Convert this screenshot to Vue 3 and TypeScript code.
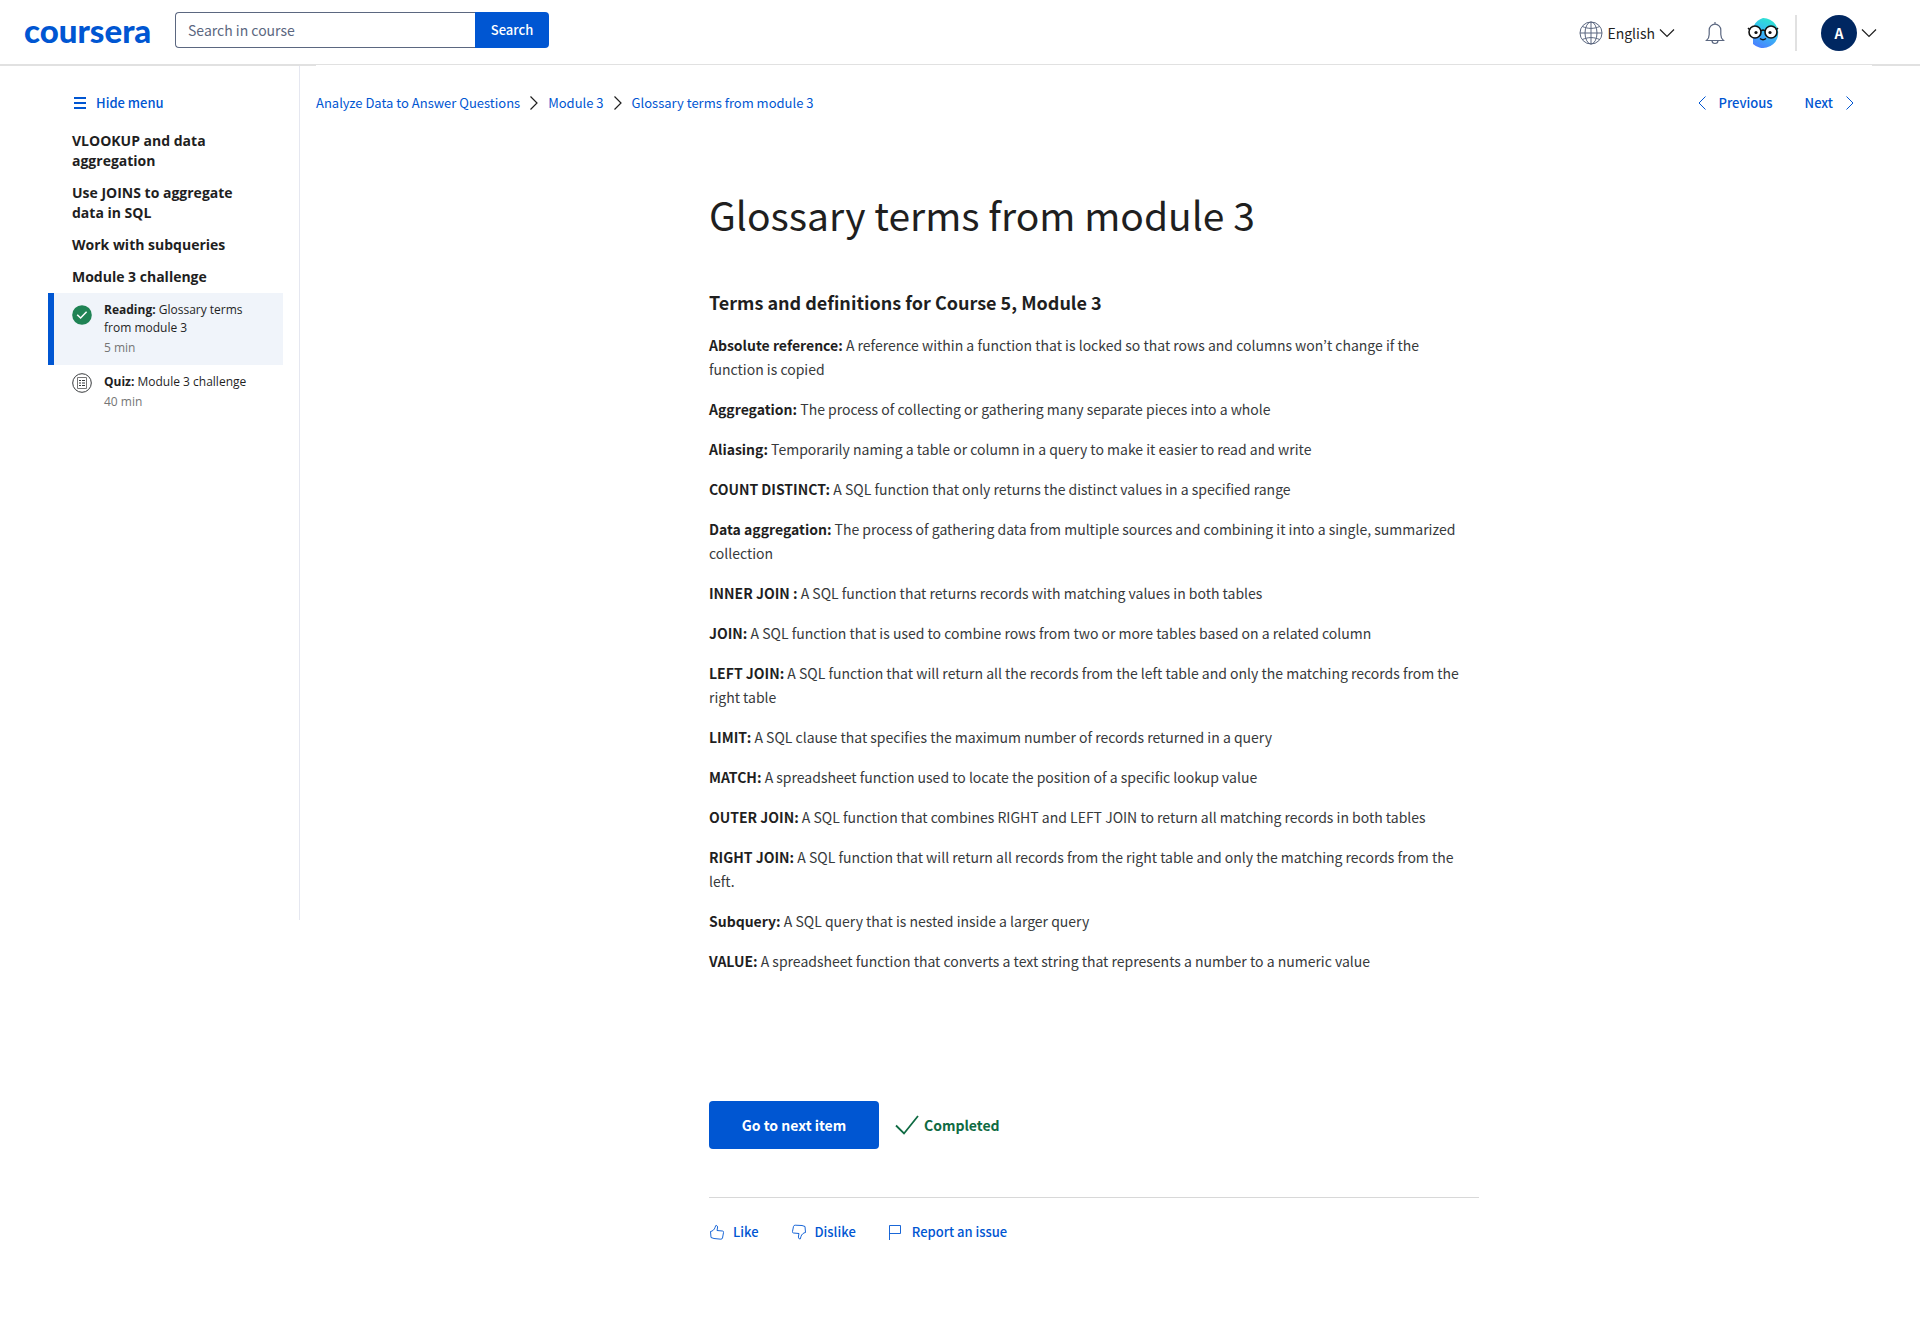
<script setup lang="ts">
import { ref } from 'vue'

interface Term {
  name: string
  text: string
}

interface Crumb {
  label: string
  href: string
}

const query = ref('')

const crumbs: Crumb[] = [
  { label: 'Analyze Data to Answer Questions', href: '#course' },
  { label: 'Module 3', href: '#module' },
  { label: 'Glossary terms from module 3', href: '#item' },
]

const lessons: string[] = [
  'VLOOKUP and data aggregation',
  'Use JOINS to aggregate data in SQL',
  'Work with subqueries',
  'Module 3 challenge',
]

const terms: Term[] = [
  { name: 'Absolute reference:', text: 'A reference within a function that is locked so that rows and columns won’t change if the\nfunction is copied' },
  { name: 'Aggregation:', text: 'The process of collecting or gathering many separate pieces into a whole' },
  { name: 'Aliasing:', text: 'Temporarily naming a table or column in a query to make it easier to read and write' },
  { name: 'COUNT DISTINCT:', text: 'A SQL function that only returns the distinct values in a specified range' },
  { name: 'Data aggregation:', text: 'The process of gathering data from multiple sources and combining it into a single, summarized\ncollection' },
  { name: 'INNER JOIN :', text: 'A SQL function that returns records with matching values in both tables' },
  { name: 'JOIN:', text: 'A SQL function that is used to combine rows from two or more tables based on a related column' },
  { name: 'LEFT JOIN:', text: 'A SQL function that will return all the records from the left table and only the matching records from the\nright table' },
  { name: 'LIMIT:', text: 'A SQL clause that specifies the maximum number of records returned in a query' },
  { name: 'MATCH:', text: 'A spreadsheet function used to locate the position of a specific lookup value' },
  { name: 'OUTER JOIN:', text: 'A SQL function that combines RIGHT and LEFT JOIN to return all matching records in both tables' },
  { name: 'RIGHT JOIN:', text: 'A SQL function that will return all records from the right table and only the matching records from the\nleft.' },
  { name: 'Subquery:', text: 'A SQL query that is nested inside a larger query' },
  { name: 'VALUE:', text: 'A spreadsheet function that converts a text string that represents a number to a numeric value' },
]
</script>

<template>
  <div class="page">
    <header class="topbar">
      <a class="logo" href="#home">coursera</a>
      <form class="search" role="search" @submit.prevent>
        <input v-model="query" type="text" placeholder="Search in course" aria-label="Search in course" />
        <button type="submit">Search</button>
      </form>
      <div class="tools">
        <button class="language" type="button">
          <svg width="24" height="24" viewBox="0 0 24 24" fill="none" stroke="#5b6780">
            <circle cx="12" cy="12" r="11" />
            <ellipse cx="12" cy="12" rx="6" ry="11" />
            <path d="M1 12h22M12 1v22M3.5 5.5c5 2.500 12 2.500 17 0M3.500 18.500c5-2.500 12-2.500 17 0" />
          </svg>
          <span>English</span>
          <svg width="16" height="10" viewBox="0 0 16 10" fill="none" stroke="#1f1f1f" stroke-width="1.200"><path d="M1 1.500l7 7 7-7" /></svg>
        </button>
        <button class="bell" type="button" aria-label="Notifications">
          <svg width="20" height="24" viewBox="0 0 20 24" fill="none" stroke="#5b6780" stroke-width="1.200">
            <path d="M10 1v2M1.500 19.500h17c-1.800-1.600-2.700-3.400-2.700-6V9a5.800 5.800 0 0 0-11.600 0v4.500c0 2.600-.9 4.400-2.700 6zM7 19.500a3 3 0 0 0 6 0" />
          </svg>
        </button>
        <button class="coach" type="button" aria-label="Coach">
          <svg width="32" height="32" viewBox="0 0 32 32">
            <defs>
              <linearGradient id="coach-skin" x1="0.700" y1="0" x2="0.300" y2="1">
                <stop offset="0" stop-color="#2fe6cf" />
                <stop offset="0.450" stop-color="#35bff2" />
                <stop offset="1" stop-color="#4a80ff" />
              </linearGradient>
            </defs>
            <path d="M16 1a15 15 0 1 1-10 26V20A15 15 0 0 1 16 1z" fill="url(#coach-skin)" />
            <g fill="#fff" stroke="#111" stroke-width="1.600">
              <circle cx="8" cy="15" r="6" />
              <circle cx="24" cy="15" r="6" />
            </g>
            <path d="M14 14q2-2 4 0M1 11l2 2M31 11l-2 2M13 21.500q3 2.500 6 0" fill="none" stroke="#111" stroke-width="1.500" />
            <circle cx="9" cy="15.500" r="1.600" fill="#111" />
            <circle cx="23" cy="15.500" r="1.600" fill="#111" />
          </svg>
        </button>
        <span class="divider"></span>
        <button class="account" type="button" aria-label="Account">
          <span class="avatar">A</span>
          <svg width="16" height="10" viewBox="0 0 16 10" fill="none" stroke="#1f1f1f" stroke-width="1.200"><path d="M1 1.500l7 7 7-7" /></svg>
        </button>
      </div>
    </header>

    <div class="body">
      <aside class="sidebar">
        <button class="hide-menu" type="button">
          <svg width="12" height="12" viewBox="0 0 12 12" fill="#0056d2"><path d="M0 0h12v2H0zM0 5h12v2H0zM0 10h12v2H0z" /></svg>
          <span>Hide menu</span>
        </button>
        <h2 v-for="lesson in lessons" :key="lesson" class="lesson">{{ lesson }}</h2>
        <a class="item current" href="#reading">
          <svg class="lowered" width="20" height="20" viewBox="0 0 20 20">
            <circle cx="10" cy="10" r="9.800" fill="#1f8354" />
            <path d="M5.200 9.700l3.400 3.300 6-6.300" fill="none" stroke="#fff" stroke-width="1.500" />
          </svg>
          <span>
            <span class="item-title"><b>Reading:</b> Glossary terms from module 3</span>
            <span class="duration">5 min</span>
          </span>
        </a>
        <a class="item" href="#quiz">
          <svg width="20" height="20" viewBox="0 0 20 20" fill="none" stroke="#373a3c">
            <circle cx="10" cy="10" r="9.300" />
            <path d="M5.500 4.500h9v11h-9z" stroke="#777" />
            <path d="M7 7.500h2M7 10h2M7 12.500h2M10 7.500h3M10 10h3M10 12.500h3" />
          </svg>
          <span>
            <span class="item-title"><b>Quiz:</b> Module 3 challenge</span>
            <span class="duration">40 min</span>
          </span>
        </a>
      </aside>

      <main class="main">
        <div class="navrow">
          <nav class="crumbs" aria-label="Breadcrumb">
            <template v-for="(crumb, i) in crumbs" :key="crumb.href">
              <svg v-if="i > 0" width="8" height="14" viewBox="0 0 8 14" fill="none" stroke="#1f1f1f" stroke-width="1.200"><path d="M.5.5L7 7 .5 13.500" /></svg>
              <a :href="crumb.href">{{ crumb.label }}</a>
            </template>
          </nav>
          <nav class="pager" aria-label="Items">
            <a href="#previous">
              <svg width="8" height="14" viewBox="0 0 8 14" fill="none" stroke="#0056d2"><path d="M7.500.5L1 7l6.500 6.500" /></svg>
              <span>Previous</span>
            </a>
            <a href="#next">
              <span>Next</span>
              <svg width="8" height="14" viewBox="0 0 8 14" fill="none" stroke="#0056d2"><path d="M.5.5L7 7 .5 13.500" /></svg>
            </a>
          </nav>
        </div>

        <article class="reading">
          <h1>Glossary terms from module 3</h1>
          <h3>Terms and definitions for Course 5, Module 3</h3>
          <p v-for="term in terms" :key="term.name"><strong>{{ term.name }}</strong> {{ term.text }}</p>

          <div class="finish">
            <button class="primary" type="button">Go to next item</button>
            <span class="completed">
              <svg width="24" height="20" viewBox="0 0 24 20" fill="none" stroke="#0f6b43" stroke-width="1.800"><path d="M1 10.500l8 8L23 1" /></svg>
              <span>Completed</span>
            </span>
          </div>

          <div class="feedback">
            <button type="button">
              <svg width="16" height="16" viewBox="0 0 16 16" fill="none" stroke="#0056d2" stroke-width="0.900" stroke-linejoin="round">
                <path d="M1.500 7.500C3.500 7.300 5.500 5.500 6 3.500L6.800 1.500C8.300 1.300 8.800 2.500 8.500 4L8 6.500l5.500.5c1 .1 1.200.8 1 1.600l-1 5.400c-.2.800-.8 1.200-1.700 1.200L5 14.500l-3-1z" />
              </svg>
              <span>Like</span>
            </button>
            <button type="button">
              <svg width="16" height="16" viewBox="0 0 16 16" fill="none" stroke="#0056d2" stroke-width="0.900" stroke-linejoin="round">
                <path d="M14.500 8.500C12.500 8.700 10.500 10.500 10 12.500l-.8 2.500C7.700 15.200 7.200 13.500 7.500 12L8 9.500 2.500 9C1.500 8.900 1.300 8.200 1.500 7.400l1-5c.2-.8.8-1.200 1.700-1.200L11 1.500l3 1z" />
              </svg>
              <span>Dislike</span>
            </button>
            <button type="button">
              <svg width="16" height="16" viewBox="0 0 16 16" fill="none" stroke="#0056d2" stroke-width="0.900">
                <path d="M1.500 16V1.500h11v8h-11" />
              </svg>
              <span>Report an issue</span>
            </button>
          </div>
        </article>
      </main>
    </div>
  </div>
</template>

<style>
body {
  margin: 0;
  background: #fff;
}
</style>

<style scoped>
.page {
  font-family: "Noto Sans CJK KR", "Noto Sans", sans-serif;
  font-size: 14px;
  line-height: 24px;
  color: #1f1f1f;
}

button {
  font: inherit;
  border: 0;
  padding: 0;
  background: none;
  color: inherit;
  cursor: pointer;
}

a {
  color: #0056d2;
  text-decoration: none;
}

svg {
  display: block;
  flex: none;
}

.topbar {
  display: flex;
  align-items: center;
  height: 64px;
  padding: 0 43px 0 24px;
  border-bottom: 1px solid #e1e1e1;
}

.logo {
  width: 127px;
  font-family: Lato, sans-serif;
  font-size: 33px;
  font-weight: 900;
  line-height: 36px;
  margin-bottom: 4px;
}

.search {
  display: flex;
  height: 36px;
  margin: 0 0 4px 24px;
}

.search input {
  box-sizing: border-box;
  width: 300px;
  padding: 0 12px;
  border: 1px solid #5b6780;
  border-right: 0;
  border-radius: 4px 0 0 4px;
  font: inherit;
  background: #fff;
  color: #1f1f1f;
}

.search input::placeholder {
  color: #5b6780;
  opacity: 1;
}

.search button {
  width: 74px;
  border-radius: 0 4px 4px 0;
  background: #0056d2;
  color: #fff;
  font-size: 13px;
  font-weight: 500;
}

.tools {
  display: flex;
  align-items: center;
  margin: 2px 0 0 auto;
}

.language,
.account {
  display: flex;
  align-items: center;
  gap: 4px;
}

.bell {
  margin-left: 30px;
}

.coach {
  margin-left: 22px;
}

.divider {
  width: 2px;
  height: 36px;
  margin: 0 24px 0 16px;
  background: #e1e1e1;
}

.avatar {
  width: 36px;
  border-radius: 50%;
  background: #002761;
  color: #fff;
  font-weight: 700;
  line-height: 36px;
}

.body {
  display: flex;
  align-items: flex-start;
  border-top: 1px solid #e1e1e1;
}

.sidebar {
  box-sizing: border-box;
  flex: none;
  width: 300px;
  min-height: 854px;
  padding: 25px 16px 0 48px;
  border-right: 1px solid #e5e7f0;
  font-family: "Open Sans", sans-serif;
}

.hide-menu {
  display: flex;
  align-items: center;
  gap: 10px;
  margin: 0 0 16px 26px;
  font-family: "Noto Sans CJK KR", sans-serif;
  font-size: 13px;
  font-weight: 500;
  color: #0056d2;
}

.lesson {
  margin: 0 32px 12px 24px;
  font-size: 14px;
  font-weight: 700;
  line-height: 20px;
}

.item {
  display: flex;
  gap: 12px;
  padding: 8px 32px 8px 18px;
  border-left: 6px solid transparent;
  font-size: 12px;
  line-height: 18px;
  color: #1f1f1f;
}

.current {
  margin-top: -6px;
  border-color: #0056d2;
  background: #f0f4fa;
}

.lowered {
  margin-top: 4px;
}

.item-title,
.duration {
  display: block;
}

.duration {
  margin-top: 2px;
  color: #757575;
}

.main {
  flex: 1;
  padding: 0 48px 0 16px;
}

.navrow {
  display: flex;
  justify-content: space-between;
  margin-top: -1px;
  padding: 26px 18px 0 0;
  background: #fff;
  font-size: 13px;
}

.crumbs,
.pager,
.pager a {
  display: flex;
  align-items: center;
}

.crumbs {
  gap: 10px;
}

.pager {
  gap: 32px;
  font-weight: 500;
}

.pager a {
  gap: 13px;
}

.reading {
  max-width: 770px;
  margin: 0 auto;
  padding-top: 71px;
}

h1 {
  margin: 0;
  font-size: 39px;
  font-weight: 400;
  line-height: 56px;
}

h3 {
  margin: 48px 0 19px;
  font-size: 18px;
  font-weight: 700;
  line-height: 24px;
}

p {
  margin: 0 0 16px;
  color: #373a3c;
  white-space: pre-line;
}

p strong {
  color: #1f1f1f;
}

.finish {
  display: flex;
  align-items: center;
  gap: 16px;
  margin-top: 128px;
  padding-bottom: 48px;
  border-bottom: 1px solid #d8d8d8;
}

.primary {
  width: 170px;
  height: 48px;
  border-radius: 4px;
  background: #0056d2;
  color: #fff;
  font-weight: 700;
}

.completed {
  display: flex;
  align-items: center;
  gap: 5px;
  color: #0f6b43;
  font-weight: 700;
}

.feedback {
  display: flex;
  gap: 32px;
  padding: 22px 0 100px;
  font-size: 13px;
  color: #0056d2;
}

.feedback button {
  display: flex;
  align-items: center;
  gap: 8px;
  font-weight: 500;
}
</style>
